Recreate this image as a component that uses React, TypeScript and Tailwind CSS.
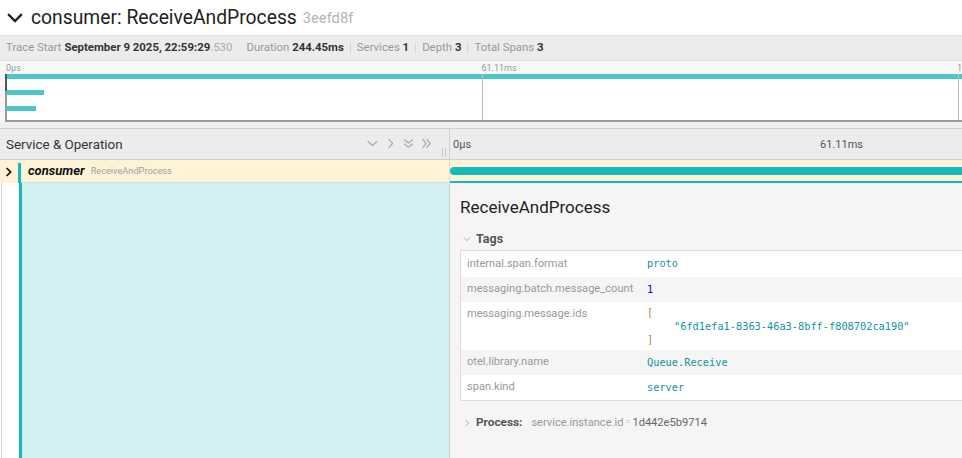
import React from "react";

const Chevron = ({ d, className }: { d: string; className?: string }) => (
  <svg viewBox="0 0 16 16" className={className} fill="none" stroke="currentColor" strokeWidth={1.5} strokeLinecap="round" strokeLinejoin="round">
    <path d={d} />
  </svg>
);

export default function App() {
  return (
    <div className="w-[962px] h-[458px] overflow-hidden bg-white font-['Roboto',sans-serif] text-[#222] flex flex-col">
      {/* Title */}
      <div className="h-[35px] flex items-center shrink-0">
        <svg viewBox="0 0 16 16" className="w-[16px] h-[16px] ml-[7px] mr-[8px] text-[#222]" fill="none" stroke="currentColor" strokeWidth={2.4} strokeLinecap="square">
          <path d="M2 5 L8 11 L14 5" />
        </svg>
        <span className="text-[19.3px] leading-none">consumer: ReceiveAndProcess</span>
        <span className="text-[14.7px] leading-none text-[#b3b3b3] ml-[6px] mt-[2px]">3eefd8f</span>
      </div>
      {/* Stats */}
      <div className="h-[25px] shrink-0 bg-[#ececec] border-t border-[#dcdcdc] flex items-center px-[6px] text-[11.4px] text-[#999]">
        <span>Trace Start <b className="text-[#333]">September 9 2025, 22:59:29</b><span className="text-[#aaa]">.530</span></span>
        <span className="ml-[14px]">Duration <b className="text-[#333]">244.45ms</b></span>
        <span className="mx-[6px] h-[12px] border-l border-[#d8d8d8]" />
        <span>Services <b className="text-[#333]">1</b></span>
        <span className="mx-[6px] h-[12px] border-l border-[#d8d8d8]" />
        <span>Depth <b className="text-[#333]">3</b></span>
        <span className="mx-[6px] h-[12px] border-l border-[#d8d8d8]" />
        <span>Total Spans <b className="text-[#333]">3</b></span>
      </div>
      {/* Minimap */}
      <div className="shrink-0 bg-[#f7f7f7] border-t border-[#e2e2e2]">
        <div className="h-[13px] flex items-end pb-[1px] text-[9px] leading-[10px] text-[#999] pl-[6px]">
          <span className="w-[476px]">0μs</span>
          <span className="w-[476px]">61.11ms</span>
          <span>1</span>
        </div>
        <div className="ml-[5px] h-[48px] bg-white border-l-2 border-b-2 border-l-[#999] border-b-[#999] flex relative">
          <div className="absolute left-[-2px] top-0 w-[2px] h-[17px] bg-[#555]" />
          <div className="w-[476px] h-full border-r border-[#bbb] flex flex-col">
            <div className="h-[5px] bg-[#4ac7cc]" />
            <div className="h-[5px] w-[37px] bg-[#4ac7cc] mt-[11px]" />
            <div className="h-[5px] w-[29px] bg-[#4ac7cc] mt-[11px]" />
          </div>
          <div className="w-[476px] h-full border-r border-[#bbb] flex flex-col">
            <div className="h-[5px] bg-[#4ac7cc]" />
          </div>
          <div className="flex-1 h-full flex flex-col">
            <div className="h-[5px] bg-[#4ac7cc]" />
          </div>
        </div>
        <div className="h-[6px] bg-[#efefef]" />
      </div>
      {/* Header row */}
      <div className="h-[32px] shrink-0 bg-[#ececec] border-t border-b border-[#cfcfcf] flex">
        <div className="w-[450px] border-r border-[#cfcfcf] flex items-center pl-[6px] pt-[3px] relative">
          <span className="text-[13.4px] text-[#333]">Service &amp; Operation</span>
          <div className="ml-auto flex items-center text-[#aaa] gap-[5px] mr-[16px] mb-[4px]">
            <Chevron d="M2.5 5.5 L8 10.5 L13.5 5.5" className="w-[13px] h-[13px]" />
            <Chevron d="M6 3 L10.5 8 L6 13" className="w-[13px] h-[13px]" />
            <svg viewBox="0 0 16 16" className="w-[13px] h-[13px]" fill="none" stroke="currentColor" strokeWidth={1.5} strokeLinecap="round" strokeLinejoin="round">
              <path d="M3 3.5 L8 7.5 L13 3.5" />
              <path d="M3 8.5 L8 12.5 L13 8.5" />
            </svg>
            <svg viewBox="0 0 16 16" className="w-[13px] h-[13px]" fill="none" stroke="currentColor" strokeWidth={1.5} strokeLinecap="round" strokeLinejoin="round">
              <path d="M3.5 3 L7.5 8 L3.5 13" />
              <path d="M8.5 3 L12.5 8 L8.5 13" />
            </svg>
          </div>
          <div className="absolute right-[3px] bottom-[2px] flex gap-[2px]">
            <div className="w-px h-[9px] bg-[#c8c8c8]" />
            <div className="w-px h-[9px] bg-[#c8c8c8]" />
          </div>
        </div>
        <div className="flex-1 flex items-center text-[11px] text-[#555] pl-[3px] pt-[3px]">
          <span className="w-[367px]">0μs</span>
          <span>61.11ms</span>
        </div>
      </div>
      {/* Span row */}
      <div className="h-[23px] shrink-0 flex bg-[#fff3d7]">
        <div className="w-[450px] flex border-r border-[#e8dcc0]">
          <div className="w-[18px] flex items-center justify-center pr-[1px]">
            <svg viewBox="0 0 10 12" className="w-[8px] h-[10px]" fill="none" stroke="#111" strokeWidth={2.2}>
              <path d="M2 1 L7 6 L2 11" />
            </svg>
          </div>
          <div className="w-[3px] bg-[#17b8be] mt-[3px]" />
          <div className="flex items-center pl-[7px] border-b border-[#bfe6e8] flex-1">
            <span className="text-[13px] font-bold italic text-[#111]">consumer</span>
            <span className="text-[9.2px] text-[#a0a0a0] ml-[6px]">ReceiveAndProcess</span>
          </div>
        </div>
        <div className="flex-1 flex flex-col">
          <div className="flex-1 flex items-center">
            <div className="h-[8px] w-full bg-[#17b8be] rounded-l-[4px]" />
          </div>
          <div className="h-[2px] bg-[#17b8be]" />
        </div>
      </div>
      {/* Detail */}
      <div className="flex-1 flex min-h-0">
        <div className="w-[450px] flex border-r border-[#d0d0d0]">
          <div className="w-[18px] bg-white border-l border-[#d6d6d6] ml-[1px]" />
          <div className="w-[3px] bg-[#17b8be]" />
          <div className="flex-1 bg-[#d2f0f2]" />
        </div>
        <div className="flex-1 bg-[#f5f5f5] pl-[10px] pt-[12px] min-w-0">
          <div className="text-[17px] text-[#222] leading-[24px]">ReceiveAndProcess</div>
          <div className="flex items-center mt-[12px] h-[16px]">
            <svg viewBox="0 0 10 10" className="w-[8px] h-[8px] ml-[3px] mr-[5px]" fill="none" stroke="#999" strokeWidth={1}>
              <path d="M1 3 L5 7 L9 3" />
            </svg>
            <span className="text-[12.5px] font-bold text-[#555]">Tags</span>
          </div>
          <div className="mt-[3px] border border-r-0 border-[#dcdcdc] bg-white text-[11.1px]">
            <div className="h-[26px] flex items-center">
              <span className="w-[186px] pl-[6px] text-[#999]">internal.span.format</span>
              <span className="font-['DejaVu_Sans_Mono',monospace] text-[10.3px] text-[#12939a]">proto</span>
            </div>
            <div className="h-[25px] flex items-center bg-[#f5f5f5]">
              <span className="w-[186px] pl-[6px] text-[#999]">messaging.batch.message_count</span>
              <span className="font-['DejaVu_Sans_Mono',monospace] text-[10.3px] text-[#1c00cf]">1</span>
            </div>
            <div className="h-[48px] flex items-start pt-[4px]">
              <span className="w-[186px] pl-[6px] text-[#999] leading-[16px]">messaging.message.ids</span>
              <div className="font-['DejaVu_Sans_Mono',monospace] text-[10.3px] leading-[13.5px]">
                <div className="text-[#b8813f]">[</div>
                <div className="pl-[27px] text-[#12939a]">"6fd1efa1-8363-46a3-8bff-f808702ca190"</div>
                <div className="text-[#b8813f]">]</div>
              </div>
            </div>
            <div className="h-[25px] flex items-center bg-[#f5f5f5]">
              <span className="w-[186px] pl-[6px] text-[#999]">otel.library.name</span>
              <span className="font-['DejaVu_Sans_Mono',monospace] text-[10.3px] text-[#12939a]">Queue.Receive</span>
            </div>
            <div className="h-[25px] flex items-center">
              <span className="w-[186px] pl-[6px] text-[#999]">span.kind</span>
              <span className="font-['DejaVu_Sans_Mono',monospace] text-[10.3px] text-[#12939a]">server</span>
            </div>
          </div>
          <div className="flex items-center mt-[13px] h-[18px]">
            <svg viewBox="0 0 10 10" className="w-[8px] h-[8px] ml-[3px] mr-[5px]" fill="none" stroke="#999" strokeWidth={1}>
              <path d="M3 1 L7 5 L3 9" />
            </svg>
            <span className="text-[11.8px] font-bold text-[#555]">Process:</span>
            <span className="text-[11.1px] text-[#999] ml-[9px]">service.instance.id</span>
            <span className="text-[9px] text-[#bbb] mx-[2px]">=</span>
            <span className="text-[11.1px] text-[#666]">1d442e5b9714</span>
          </div>
        </div>
      </div>
    </div>
  );
}
